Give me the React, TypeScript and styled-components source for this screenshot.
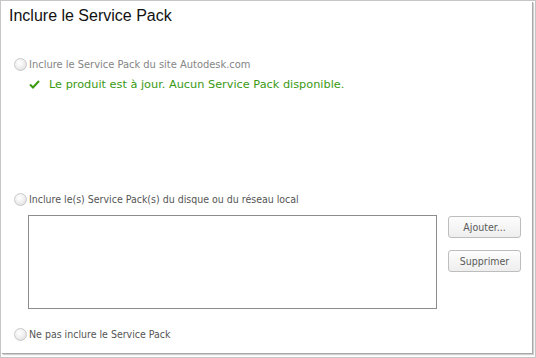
import styled, { createGlobalStyle } from "styled-components";

const GlobalStyle = createGlobalStyle`
  html, body {
    margin: 0;
    padding: 0;
    background: #ffffff;
  }
`;

const Frame = styled.div`
  width: 536px;
  height: 358px;
  box-sizing: border-box;
  border: 1px solid #c6c6c6;
  background: #ffffff;
`;

const Panel = styled.div`
  width: 531px;
  height: 352px;
  box-sizing: border-box;
  box-shadow: 1px 1px 0 #a8a8a8, 2px 2px 1px #cfcfcf;
  display: flex;
  flex-direction: column;
  padding: 5px 0 0 8px;
`;

const Title = styled.h1`
  margin: 0;
  font-family: "Liberation Sans", Arial, sans-serif;
  font-weight: normal;
  font-size: 16px;
  line-height: 20px;
  color: #111;
`;

const OptionRow = styled.label<{ $top: number }>`
  display: flex;
  align-items: center;
  gap: 2px;
  height: 16px;
  margin-top: ${(p) => p.$top}px;
  padding-left: 5px;
`;

const Radio = styled.span`
  width: 11px;
  height: 11px;
  border-radius: 50%;
  border: 1px solid #c9c9c9;
  background: radial-gradient(circle at 40% 35%, #ffffff 0%, #f1f1f1 45%, #d8d8d8 100%);
  flex: none;
`;

const OptionText = styled.span<{ $muted?: boolean }>`
  font-family: "DejaVu Sans Condensed", "DejaVu Sans", sans-serif;
  font-size: ${(p) => (p.$muted ? "11px" : "10.5px")};
  color: ${(p) => (p.$muted ? "#858585" : "#555555")};
  white-space: nowrap;
`;

const StatusRow = styled.div`
  display: flex;
  align-items: center;
  gap: 9px;
  height: 16px;
  margin-top: 4px;
  padding-left: 20px;
`;

const StatusText = styled.span`
  font-family: "DejaVu Sans", Verdana, sans-serif;
  font-size: 11.3px;
  color: #3a9a12;
  white-space: nowrap;
`;

const LocalRow = styled.div`
  display: flex;
  gap: 11px;
  margin-top: 8px;
  padding-left: 19px;
`;

const ListBox = styled.div`
  width: 409px;
  height: 94px;
  box-sizing: border-box;
  border: 1px solid #8c8c8c;
  background: #fff;
`;

const ButtonCol = styled.div`
  display: flex;
  flex-direction: column;
  gap: 12px;
  padding-top: 1px;
`;

const Button = styled.button`
  width: 73px;
  height: 22px;
  box-sizing: border-box;
  border: 1px solid #bdbdbd;
  border-radius: 3px;
  background: linear-gradient(#fdfdfd, #eeeeee);
  font-family: "DejaVu Sans Condensed", "DejaVu Sans", sans-serif;
  font-size: 10.5px;
  color: #5a5a5a;
  padding: 0;
`;

function Check() {
  return (
    <svg width="11" height="9" viewBox="0 0 11 9">
      <path d="M1 4.5 L4 7.5 L10 1" fill="none" stroke="#3a9a12" strokeWidth="2" />
    </svg>
  );
}

function App() {
  return (
    <>
      <GlobalStyle />
      <Frame>
        <Panel>
          <Title>Inclure le Service Pack</Title>
          <OptionRow $top={30}>
            <Radio />
            <OptionText $muted>Inclure le Service Pack du site Autodesk.com</OptionText>
          </OptionRow>
          <StatusRow>
            <Check />
            <StatusText>Le produit est à jour. Aucun Service Pack disponible.</StatusText>
          </StatusRow>
          <OptionRow $top={99}>
            <Radio />
            <OptionText>Inclure le(s) Service Pack(s) du disque ou du réseau local</OptionText>
          </OptionRow>
          <LocalRow>
            <ListBox />
            <ButtonCol>
              <Button>Ajouter...</Button>
              <Button>Supprimer</Button>
            </ButtonCol>
          </LocalRow>
          <OptionRow $top={17}>
            <Radio />
            <OptionText>Ne pas inclure le Service Pack</OptionText>
          </OptionRow>
        </Panel>
      </Frame>
    </>
  );
}

export default App;
